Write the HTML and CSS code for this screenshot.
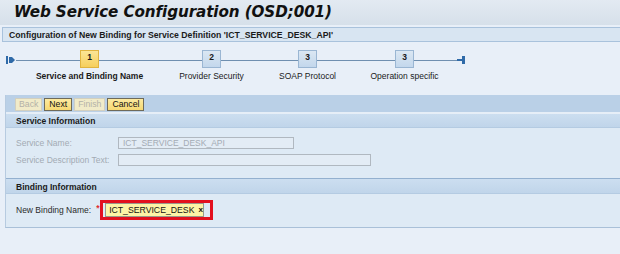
FILE: index.html
```html
<!DOCTYPE html>
<html>
<head>
    <title>Web Service Configuration</title>
    <meta charset="UTF-8">
    <link rel="stylesheet" href="styles.css">
</head>
<body>
    <div class="title-bar">Web Service Configuration (OSD;001)</div>
    <div class="subheader">Configuration of New Binding for Service Definition 'ICT_SERVICE_DESK_API'</div>

    <div class="roadmap">
        <svg class="rm-start" width="10" height="8" viewBox="0 0 10 8">
            <rect x="0" y="0" width="2" height="8" fill="#2f6aa8"/>
            <path d="M3 1 L6 1 L9 4 L6 7 L3 7 Z" fill="#2f6aa8"/>
        </svg>
        <div class="rm-seg seg-a"></div>
        <div class="rm-step">
            <div class="rm-box active">1</div>
            <div class="rm-label strong">Service and Binding Name</div>
        </div>
        <div class="rm-seg seg-b"></div>
        <div class="rm-step">
            <div class="rm-box">2</div>
            <div class="rm-label">Provider Security</div>
        </div>
        <div class="rm-seg seg-c"></div>
        <div class="rm-step">
            <div class="rm-box">3</div>
            <div class="rm-label">SOAP Protocol</div>
        </div>
        <div class="rm-seg seg-d"></div>
        <div class="rm-step">
            <div class="rm-box">3</div>
            <div class="rm-label">Operation specific</div>
        </div>
        <div class="rm-seg seg-e"></div>
        <svg class="rm-end" width="8" height="8" viewBox="0 0 8 8">
            <rect x="0" y="3" width="6" height="2" fill="#2f6aa8"/>
            <rect x="5" y="0" width="3" height="8" fill="#2f6aa8"/>
        </svg>
    </div>

    <div class="panel">
        <div class="toolbar">
            <button class="btn disabled">Back</button>
            <button class="btn">Next</button>
            <button class="btn disabled">Finish</button>
            <button class="btn">Cancel</button>
        </div>

        <div class="section-head">Service Information</div>
        <div class="section-body">
            <div class="field-row">
                <span class="field-label muted">Service Name:</span>
                <span class="field-input readonly short">ICT_SERVICE_DESK_API</span>
            </div>
            <div class="field-row">
                <span class="field-label muted">Service Description Text:</span>
                <span class="field-input readonly long"></span>
            </div>
        </div>

        <div class="section-head lined">Binding Information</div>
        <div class="section-body binding">
            <div class="field-row">
                <span class="field-label auto">New Binding Name:</span>
                <span class="required">*</span>
                <div class="highlight">
                    <span class="field-input editable"><span class="caret"></span>ICT_SERVICE_DESK<span class="clear">x</span></span>
                </div>
            </div>
        </div>
    </div>
</body>
</html>
```

FILE: styles.css
```css
body {
  margin: 0;
  background-color: #e8eff8;
  font-family: "Liberation Sans", Arial, sans-serif;
  font-size: 8.5px;
  color: #222;
  width: 620px;
  height: 254px;
  overflow: hidden;
}

.title-bar {
  height: 25px;
  box-sizing: border-box;
  padding: 3px 0 0 14px;
  background: linear-gradient(#e3eaf2, #d6e0ea);
  font-family: "DejaVu Sans", Verdana, sans-serif;
  font-weight: bold;
  font-style: italic;
  font-size: 15.2px;
  line-height: 19px;
  color: #111;
  letter-spacing: -0.1px;
}

.subheader {
  margin: 2px 0 0 2px;
  height: 15px;
  box-sizing: border-box;
  padding: 2px 0 0 6px;
  background-color: #d8e5f2;
  border: 1px solid #a9c2dc;
  border-right: none;
  font-weight: bold;
  font-size: 8.7px;
  color: #1a1a1a;
}

/* roadmap */
.roadmap {
  display: flex;
  align-items: flex-start;
  height: 53px;
  box-sizing: border-box;
  padding: 8px 0 0 6px;
}

.rm-start {
  margin-top: 6px;
  flex: none;
}

.rm-end {
  margin-top: 6px;
  flex: none;
}

.rm-seg {
  height: 1px;
  margin-top: 10px;
  background-color: #6f8fb0;
  flex: none;
}

.seg-a { width: 64px; }
.seg-b { width: 103px; }
.seg-c { width: 77px; }
.seg-d { width: 78px; }
.seg-e { width: 43px; }

.rm-step {
  display: flex;
  flex-direction: column;
  align-items: center;
  width: 19px;
  flex: none;
}

.rm-box {
  width: 19px;
  height: 18px;
  box-sizing: border-box;
  border: 1px solid #9ab6d3;
  background: linear-gradient(#dbe7f3, #c3d7ec);
  text-align: center;
  font-weight: bold;
  font-size: 8.5px;
  line-height: 12px;
  color: #1a1a1a;
}

.rm-box.active {
  border-color: #e0b440;
  background: linear-gradient(#fbe596, #f6cf5c);
}

.rm-label {
  white-space: nowrap;
  margin-top: 3px;
  font-size: 8.5px;
  color: #1a1a1a;
}

.rm-label.strong {
  font-weight: bold;
}

/* main panel */
.panel {
  margin: 0 0 0 5px;
  border-left: 1px solid #b7cbe0;
  border-bottom: 1px solid #a9c0d8;
  background-color: #deeaf5;
}

.toolbar {
  display: flex;
  gap: 2px;
  height: 19px;
  box-sizing: border-box;
  padding: 3px 0 0 9px;
  background-color: #bad0e7;
  border-bottom: 2px solid #e6eef7;
}

.btn {
  height: 13px;
  padding: 0 4px;
  box-sizing: border-box;
  border: 1px solid #6e6a5a;
  background: linear-gradient(#fdeaa0, #f5d873);
  font-family: "Liberation Sans", Arial, sans-serif;
  font-size: 8.7px;
  line-height: 11px;
  color: #111;
}

.btn.disabled {
  padding: 0 3px;
  border-color: #d2cfbf;
  background: #f1ebc9;
  color: #b4b2a8;
}

.section-head {
  height: 14px;
  box-sizing: border-box;
  padding: 2px 0 0 10px;
  background: linear-gradient(#ccdef0, #c0d5ea);
  border-bottom: 1px solid #b4cbe2;
  font-weight: bold;
  font-size: 8.5px;
  color: #1a1a1a;
}

.section-head.lined {
  height: 16px;
  border-top: 1px solid #93b0cf;
  padding-top: 3px;
}

.section-body {
  display: flex;
  flex-direction: column;
  gap: 5px;
  padding: 9px 0 12px 10px;
}

.section-body.binding {
  padding: 6px 0 7px 10px;
}

.field-row {
  display: flex;
  align-items: center;
}

.field-label {
  width: 102px;
  flex: none;
  white-space: nowrap;
  color: #2a2a2a;
}

.field-label.auto {
  width: auto;
  margin-right: 5px;
}

.field-label.muted {
  color: #a3abb4;
}

.field-input {
  height: 12px;
  box-sizing: border-box;
  padding: 0 4px;
  border: 1px solid #b0b8c0;
  font-size: 8.5px;
  line-height: 10px;
}

.field-input.readonly {
  color: #a3abb4;
  background-color: #e3ecf5;
}

.field-input.short { width: 176px; }
.field-input.long { width: 253px; }

.required {
  width: 4px;
  color: #e03030;
  font-weight: bold;
  margin-top: -4px;
}

.highlight {
  border: 3px solid #e3101e;
  padding: 0 6px 0 2px;
  background-color: #deeaf5;
}

.field-input.editable {
  display: flex;
  align-items: center;
  width: 99px;
  height: 14px;
  padding: 0 3px 0 2px;
  border-color: #9a9a8a;
  background-color: #fdf4a6;
  color: #111;
  font-size: 8.7px;
}

.caret {
  width: 1px;
  height: 10px;
  margin-right: 1px;
  background-color: #111;
}

.clear {
  margin-left: 4px;
  font-size: 8px;
  font-weight: bold;
}
```
